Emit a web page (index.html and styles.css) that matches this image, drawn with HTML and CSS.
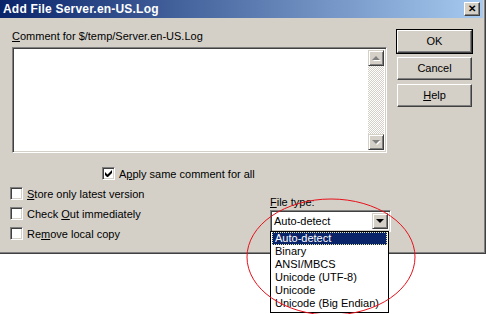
FILE: index.html
```html
<!DOCTYPE html>
<html>
<head>
    <title>Add File</title>
    <link rel="stylesheet" href="styles.css">
</head>
<body>
    <div class="window">
        <div class="titlebar">
            <span class="title">Add File Server.en-US.Log</span>
            <span class="close-btn">&#x2715;</span>
        </div>
        <div class="dialog">
            <div class="top-area">
                <div class="comment-col">
                    <div class="label"><u>C</u>omment for $/temp/Server.en-US.Log</div>
                    <div class="textbox">
                        <div class="scrollbar">
                            <div class="arrow-btn"><span class="tri up"></span></div>
                            <div class="track"></div>
                            <div class="arrow-btn"><span class="tri down"></span></div>
                        </div>
                    </div>
                </div>
                <div class="buttons">
                    <div class="button default">OK</div>
                    <div class="button">Cancel</div>
                    <div class="button"><u>H</u>elp</div>
                </div>
            </div>
            <div class="check-row apply">
                <span class="checkbox checked">
                    <svg width="7" height="7" viewBox="0 0 7 7"><path d="M0 2v3l2 2h1l4-4V0L2.5 4.5z" fill="#000"/></svg>
                </span>
                <span>A<u>p</u>ply same comment for all</span>
            </div>
            <div class="bottom-area">
                <div class="options">
                    <div class="check-row"><span class="checkbox"></span><span><u>S</u>tore only latest version</span></div>
                    <div class="check-row"><span class="checkbox"></span><span>Check <u>O</u>ut immediately</span></div>
                    <div class="check-row"><span class="checkbox"></span><span>Re<u>m</u>ove local copy</span></div>
                </div>
                <div class="filetype">
                    <div class="label"><u>F</u>ile type:</div>
                    <div class="combo">
                        <span class="combo-text">Auto-detect</span>
                        <span class="combo-btn"><span class="tri down black"></span></span>
                    </div>
                    <div class="dropdown">
                        <div class="item selected">Auto-detect</div>
                        <div class="item">Binary</div>
                        <div class="item">ANSI/MBCS</div>
                        <div class="item">Unicode (UTF-8)</div>
                        <div class="item">Unicode</div>
                        <div class="item">Unicode (Big Endian)</div>
                    </div>
                </div>
            </div>
        </div>
    </div>
    <svg class="circle" width="486" height="314" viewBox="0 0 486 314">
        <ellipse cx="331" cy="257" rx="84" ry="58" fill="none" stroke="#e8101a" stroke-width="1"/>
    </svg>
</body>
</html>
```
FILE: styles.css
```css
body {
    margin: 0;
    background-color: white;
    font-family: "Liberation Sans", Arial, sans-serif;
    font-size: 11px;
    color: #000;
    position: relative;
    width: 486px;
    height: 314px;
    overflow: hidden;
}
u {
    text-decoration: underline;
}
.window {
    width: 483px;
    background-color: #d4d0c8;
    border-right: 1px solid #404040;
    border-bottom: 1px solid #404040;
    box-shadow: inset -1px -1px #808080;
    padding-right: 2px;
}
.titlebar {
    height: 18px;
    display: flex;
    align-items: center;
    justify-content: space-between;
    background: linear-gradient(to right, #0a246a, #a6caf0);
    padding-left: 3px;
    padding-right: 3px;
}
.title {
    color: white;
    font-weight: bold;
    font-size: 12px;
    letter-spacing: 0.2px;
}
.close-btn {
    width: 14px;
    height: 12px;
    background-color: #d4d0c8;
    border: 1px solid;
    border-color: #fff #404040 #404040 #fff;
    box-shadow: inset -1px -1px #808080;
    font-size: 10px;
    font-weight: bold;
    line-height: 12px;
    text-align: center;
}
.dialog {
    height: 235px;
    position: relative;
}
.top-area {
    display: flex;
    padding-top: 12px;
}
.comment-col {
    margin-left: 12px;
    width: 375px;
}
.label {
    height: 17px;
    line-height: 13px;
}
.textbox {
    height: 100px;
    background-color: white;
    border: 1px solid;
    border-color: #808080 #fff #fff #808080;
    box-shadow: inset 1px 1px #404040, inset -1px -1px #d4d0c8;
    padding: 2px;
    display: flex;
    justify-content: flex-end;
}
.scrollbar {
    width: 16px;
    display: flex;
    flex-direction: column;
}
.track {
    flex: 1;
    background: repeating-conic-gradient(#d4d0c8 0 25%, #fff 0 50%) 0 0 / 2px 2px;
}
.arrow-btn {
    width: 14px;
    height: 14px;
    background-color: #d4d0c8;
    border: 1px solid;
    border-color: #d4d0c8 #404040 #404040 #d4d0c8;
    box-shadow: inset 1px 1px #fff, inset -1px -1px #808080;
    display: flex;
    align-items: center;
    justify-content: center;
}
.tri {
    width: 0;
    height: 0;
    border-left: 4px solid transparent;
    border-right: 4px solid transparent;
}
.tri.up {
    border-bottom: 4px solid #808080;
    filter: drop-shadow(1px 1px 0 #fff);
}
.tri.down {
    border-top: 4px solid #808080;
    filter: drop-shadow(1px 1px 0 #fff);
}
.tri.down.black {
    border-top-color: #000;
    filter: none;
}
.buttons {
    margin-left: 10px;
    display: flex;
    flex-direction: column;
    gap: 4px;
}
.button {
    width: 73px;
    height: 21px;
    border: 1px solid;
    border-color: #fff #404040 #404040 #fff;
    box-shadow: inset -1px -1px #808080;
    text-align: center;
    line-height: 21px;
}
.button.default {
    outline: 1px solid #000;
    outline-offset: 0;
}
.check-row {
    display: flex;
    align-items: center;
    gap: 4px;
    height: 13px;
}
.apply {
    margin-top: 14px;
    margin-left: 102px;
}
.checkbox {
    width: 11px;
    height: 11px;
    background-color: white;
    border: 1px solid;
    border-color: #808080 #fff #fff #808080;
    box-shadow: inset 1px 1px #404040, inset -1px -1px #d4d0c8;
    display: flex;
    align-items: center;
    justify-content: center;
}
.bottom-area {
    display: flex;
    margin-top: 7px;
}
.options {
    margin-left: 10px;
    width: 260px;
    display: flex;
    flex-direction: column;
    gap: 7px;
}
.filetype {
    position: relative;
    margin-top: 9px;
}
.filetype .label {
    height: 14px;
}
.combo {
    width: 115px;
    height: 16px;
    background-color: white;
    border: 1px solid;
    border-color: #808080 #fff #fff #808080;
    box-shadow: inset 1px 1px #404040, inset -1px -1px #d4d0c8;
    padding: 2px;
    display: flex;
    align-items: center;
    justify-content: space-between;
}
.combo-text {
    padding-left: 1px;
}
.combo-btn {
    width: 14px;
    height: 14px;
    background-color: #d4d0c8;
    border: 1px solid;
    border-color: #d4d0c8 #404040 #404040 #d4d0c8;
    box-shadow: inset 1px 1px #fff, inset -1px -1px #808080;
    display: flex;
    align-items: center;
    justify-content: center;
}
.dropdown {
    position: absolute;
    left: 0;
    top: 35px;
    width: 117px;
    background-color: white;
    border: 1px solid #000;
    padding-bottom: 2px;
}
.item {
    height: 11px;
    line-height: 11px;
    padding-left: 2px;
    margin: 0 1px;
    border: 1px solid transparent;
}
.item.selected {
    background-color: #0a246a;
    color: white;
    border: 1px dotted #e8e8a0;
}
.circle {
    position: absolute;
    left: 0;
    top: 0;
    pointer-events: none;
}
```
